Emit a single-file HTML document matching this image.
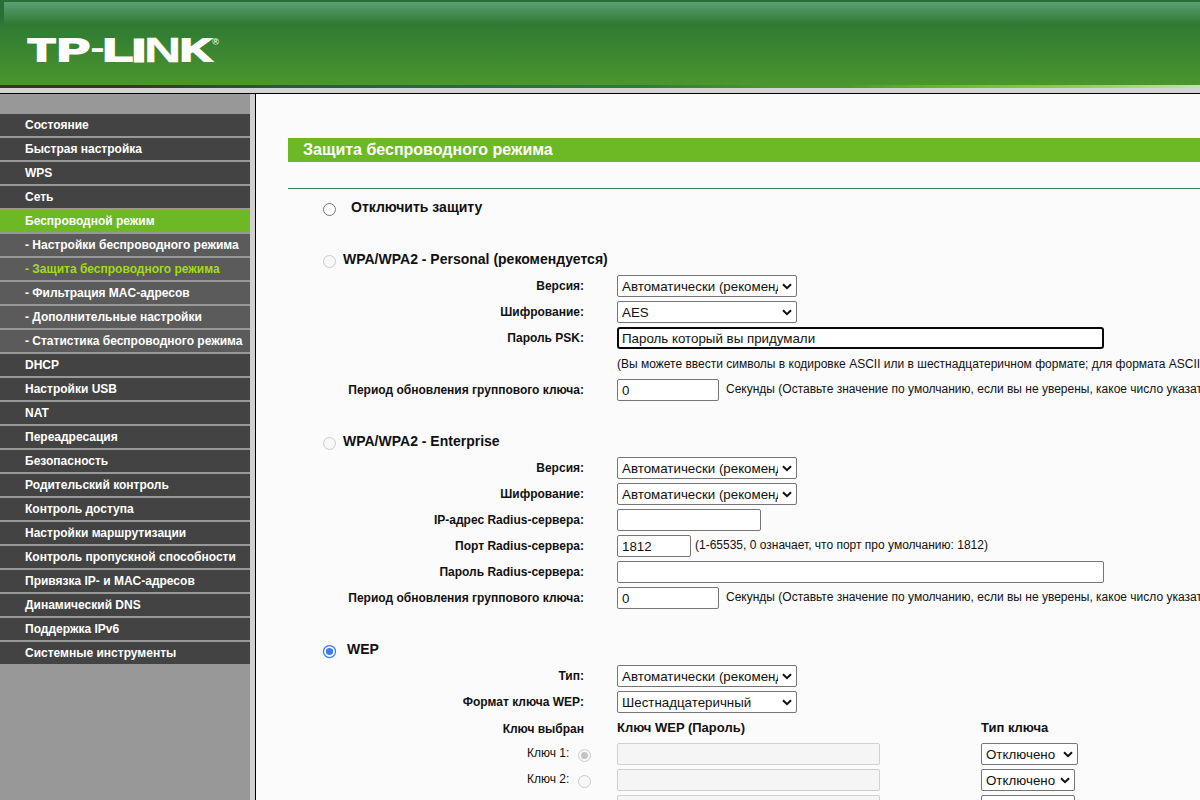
<!DOCTYPE html>
<html lang="ru">
<head>
<meta charset="utf-8">
<title>TP-LINK</title>
<style>
*{box-sizing:border-box;}
html,body{margin:0;padding:0;}
body{width:1200px;height:800px;overflow:hidden;background:#fbfbfb;font-family:"Liberation Sans",Arial,sans-serif;font-size:12px;color:#111;position:relative;}
.abs{position:absolute;}
/* header */
#hdr{position:absolute;left:0;top:0;width:1200px;height:85px;background:linear-gradient(to bottom,#2e7a33 0,#2e7a33 24px,#4b962d 85px);}
#hdr .top{position:absolute;left:0;top:0;width:1200px;height:2px;background:#276f37;}
#hdr .gloss{position:absolute;left:4px;top:2px;width:1196px;height:22px;background:linear-gradient(to bottom,#5c9f73 0,#2e7a34 22px);}
#hdr .lft{position:absolute;left:0;top:0;width:4px;height:26px;background:linear-gradient(to bottom,#276f37 0,#276f37 16px,#2e7a33 26px);}
#stripe{position:absolute;left:0;top:85px;width:1200px;height:3px;background:linear-gradient(to right,#333 0,#333 120px,#275c38 280px,#29703a 500px,#2d7c35 640px,#4b962d 770px,#4b962d 840px,#6cbd2a 960px,#8fd053 1080px,#bfe4a6 1200px);}
#lgray{position:absolute;left:0;top:88px;width:1200px;height:5px;background:#d3d3d3;}
#bline{position:absolute;left:0;top:93px;width:1200px;height:1px;background:#000;}
#logo{position:absolute;left:0;top:0;}
/* sidebar */
#side{position:absolute;left:0;top:94px;width:250px;height:706px;background:#989898;}
#sstrip{position:absolute;left:250px;top:94px;width:5px;height:706px;background:#d0d0d0;}
#vline{position:absolute;left:255px;top:94px;width:1px;height:706px;background:#000;}
#menu{position:absolute;left:0;top:20px;width:250px;margin:0;padding:0;list-style:none;}
#menu li{height:22px;margin-bottom:2px;background:#434343;color:#fff;font-weight:bold;font-size:12px;line-height:22px;padding-left:25px;white-space:nowrap;}
#menu li.act{background:#6db825;}
#menu li.sub{background:#5b5b5b;}
#menu li.cur{color:#a2db1c;}
/* content */
#title{position:absolute;left:288px;top:138px;width:912px;height:24px;background:#6db825;color:#fff;font-weight:bold;font-size:16px;line-height:23px;padding-left:15px;white-space:nowrap;}
#gl{position:absolute;left:288px;top:188px;width:912px;height:1px;background:#348550;}
.lbl{position:absolute;left:300px;width:284px;text-align:right;font-weight:bold;font-size:12px;line-height:14px;white-space:nowrap;color:#111;}
.sec{position:absolute;font-weight:bold;font-size:14px;line-height:16px;white-space:nowrap;color:#111;}
.txt{position:absolute;font-size:12px;line-height:14px;white-space:nowrap;color:#111;}
.sel{position:absolute;height:22px;border:1px solid #767676;border-radius:2px;background:#fff;font-size:13.33px;line-height:22px;padding-left:4px;white-space:nowrap;overflow:hidden;color:#111;}
.sel svg{position:absolute;right:4px;top:7px;width:10px;height:7px;}
.sel .t{display:block;overflow:hidden;white-space:nowrap;}
.inp{position:absolute;height:22px;border:1px solid #767676;border-radius:2px;background:#fff;font-size:13.33px;line-height:22px;padding-left:4px;white-space:nowrap;color:#111;}
.inp.dis{border-color:#d0d0d0;background:#f5f5f5;}
.inp.foc{border:2px solid #080808;border-radius:3px;line-height:20px;padding-left:3px;}
.rad{position:absolute;width:13px;height:13px;border:1px solid #767676;border-radius:50%;background:#fff;}
.rad.dim{border-color:#cacaca;background:#f8f8f8;}
.rad.on{border:1px solid #2a6fe8;}
.rad.on i{position:absolute;left:2px;top:2px;width:7px;height:7px;border-radius:50%;background:#2a6fe8;}
.rad.dim.on2 i{position:absolute;left:2px;top:2px;width:7px;height:7px;border-radius:50%;background:#c4c4c4;}
</style>
</head>
<body>
<div id="hdr"><div class="top"></div><div class="gloss"></div><div class="lft"></div>
<svg id="logo" width="240" height="85" viewBox="0 0 240 85"><text font-family="Liberation Sans, Arial, sans-serif" font-weight="bold" font-size="33" fill="#fff" stroke="#fff" stroke-linejoin="miter"><tspan x="28.24" y="60.90" font-size="31.69" stroke-width="2.2" textLength="26.72" lengthAdjust="spacingAndGlyphs">T</tspan><tspan x="57.27" y="61.00" font-size="31.98" stroke-width="2" textLength="32.37" lengthAdjust="spacingAndGlyphs">P</tspan><tspan x="90.31" y="57.95" font-size="31.00" stroke-width="0" textLength="14.42" lengthAdjust="spacingAndGlyphs">-</tspan><tspan x="103.01" y="61.00" font-size="31.98" stroke-width="2" textLength="29.66" lengthAdjust="spacingAndGlyphs">L</tspan><tspan x="130.68" y="61.50" font-size="33.43" stroke-width="1" textLength="16.37" lengthAdjust="spacingAndGlyphs">I</tspan><tspan x="144.02" y="61.85" font-size="34.45" stroke-width="0.3" textLength="37.22" lengthAdjust="spacingAndGlyphs">N</tspan><tspan x="180.01" y="61.10" font-size="32.27" stroke-width="1.8" textLength="32.20" lengthAdjust="spacingAndGlyphs">K</tspan></text><text x="212.3" y="44.6" font-family="Liberation Sans, Arial, sans-serif" font-size="9" font-weight="bold" fill="#e6f4e2">®</text></svg>
</div>
<div id="stripe"></div><div id="lgray"></div><div id="bline"></div>

<div id="side">
<ul id="menu">
<li>Состояние</li>
<li>Быстрая настройка</li>
<li>WPS</li>
<li>Сеть</li>
<li class="act">Беспроводной режим</li>
<li class="sub">- Настройки беспроводного режима</li>
<li class="sub cur">- Защита беспроводного режима</li>
<li class="sub">- Фильтрация MAC-адресов</li>
<li class="sub">- Дополнительные настройки</li>
<li class="sub">- Статистика беспроводного режима</li>
<li>DHCP</li>
<li>Настройки USB</li>
<li>NAT</li>
<li>Переадресация</li>
<li>Безопасность</li>
<li>Родительский контроль</li>
<li>Контроль доступа</li>
<li>Настройки маршрутизации</li>
<li>Контроль пропускной способности</li>
<li>Привязка IP- и MAC-адресов</li>
<li>Динамический DNS</li>
<li>Поддержка IPv6</li>
<li>Системные инструменты</li>
</ul>
</div>
<div id="sstrip"></div><div id="vline"></div>

<div id="title">Защита беспроводного режима</div>
<div id="gl"></div>

<!-- section 1 -->
<div class="rad" style="left:323px;top:203px;"></div>
<div class="sec" style="left:351px;top:199px;">Отключить защиту</div>

<!-- section 2 -->
<div class="rad dim" style="left:323px;top:255px;"></div>
<div class="sec" style="left:343px;top:251px;">WPA/WPA2 - Personal (рекомендуется)</div>

<div class="lbl" style="top:279px;">Версия:</div>
<div class="sel" style="left:617px;top:275px;width:180px;"><span class="t" style="width:156px;">Автоматически (рекомендуется)</span><svg viewBox="0 0 10 7"><path d="M1 1.2 L5 5.2 L9 1.2" fill="none" stroke="#111" stroke-width="2"/></svg></div>
<div class="lbl" style="top:305px;">Шифрование:</div>
<div class="sel" style="left:617px;top:301px;width:180px;"><span class="t" style="width:156px;">AES</span><svg viewBox="0 0 10 7"><path d="M1 1.2 L5 5.2 L9 1.2" fill="none" stroke="#111" stroke-width="2"/></svg></div>
<div class="lbl" style="top:331px;">Пароль PSK:</div>
<div class="inp foc" style="left:617px;top:327px;width:487px;">Пароль который вы придумали</div>
<div class="txt" style="left:617px;top:357px;">(Вы можете ввести символы в кодировке ASCII или в шестнадцатеричном формате; для формата ASCII длина пароля должна быть от 8 до 63 символов)</div>
<div class="lbl" style="top:383px;">Период обновления группового ключа:</div>
<div class="inp" style="left:617px;top:379px;width:102px;">0</div>
<div class="txt" style="left:726px;top:382px;">Секунды (Оставьте значение по умолчанию, если вы не уверены, какое число указать, минимальное значение 30, 0 означает отсутствие обновления)</div>

<!-- section 3 -->
<div class="rad dim" style="left:323px;top:437px;"></div>
<div class="sec" style="left:343px;top:433px;">WPA/WPA2 - Enterprise</div>
<div class="lbl" style="top:461px;">Версия:</div>
<div class="sel" style="left:617px;top:457px;width:180px;"><span class="t" style="width:156px;">Автоматически (рекомендуется)</span><svg viewBox="0 0 10 7"><path d="M1 1.2 L5 5.2 L9 1.2" fill="none" stroke="#111" stroke-width="2"/></svg></div>
<div class="lbl" style="top:487px;">Шифрование:</div>
<div class="sel" style="left:617px;top:483px;width:180px;"><span class="t" style="width:156px;">Автоматически (рекомендуется)</span><svg viewBox="0 0 10 7"><path d="M1 1.2 L5 5.2 L9 1.2" fill="none" stroke="#111" stroke-width="2"/></svg></div>
<div class="lbl" style="top:513px;">IP-адрес Radius-сервера:</div>
<div class="inp" style="left:617px;top:509px;width:144px;"></div>
<div class="lbl" style="top:539px;">Порт Radius-сервера:</div>
<div class="inp" style="left:617px;top:535px;width:74px;">1812</div>
<div class="txt" style="left:695px;top:538px;">(1-65535, 0 означает, что порт про умолчанию: 1812)</div>
<div class="lbl" style="top:565px;">Пароль Radius-сервера:</div>
<div class="inp" style="left:617px;top:561px;width:487px;"></div>
<div class="lbl" style="top:591px;">Период обновления группового ключа:</div>
<div class="inp" style="left:617px;top:587px;width:102px;">0</div>
<div class="txt" style="left:726px;top:590px;">Секунды (Оставьте значение по умолчанию, если вы не уверены, какое число указать, минимальное значение 30, 0 означает отсутствие обновления)</div>

<!-- section 4 -->
<svg class="abs" style="left:322px;top:644px;" width="15" height="15" viewBox="0 0 15 15"><circle cx="7.5" cy="7.5" r="6" fill="#fff" stroke="#3a79f0" stroke-width="1.25"/><circle cx="7.5" cy="7.5" r="3.6" fill="#3a79f0"/></svg>
<div class="sec" style="left:347px;top:641px;">WEP</div>
<div class="lbl" style="top:669px;">Тип:</div>
<div class="sel" style="left:617px;top:665px;width:180px;"><span class="t" style="width:156px;">Автоматически (рекомендуется)</span><svg viewBox="0 0 10 7"><path d="M1 1.2 L5 5.2 L9 1.2" fill="none" stroke="#111" stroke-width="2"/></svg></div>
<div class="lbl" style="top:695px;">Формат ключа WEP:</div>
<div class="sel" style="left:617px;top:691px;width:180px;"><span class="t" style="width:156px;">Шестнадцатеричный</span><svg viewBox="0 0 10 7"><path d="M1 1.2 L5 5.2 L9 1.2" fill="none" stroke="#111" stroke-width="2"/></svg></div>
<div class="lbl" style="top:722px;">Ключ выбран</div>
<div class="sec" style="left:617px;top:720px;font-size:13px;">Ключ WEP (Пароль)</div>
<div class="sec" style="left:981px;top:720px;font-size:13px;">Тип ключа</div>

<div class="txt" style="left:527px;top:746px;">Ключ 1:</div>
<div class="rad dim on2" style="left:578px;top:749px;"><i></i></div>
<div class="inp dis" style="left:617px;top:743px;width:263px;"></div>
<div class="sel" style="left:981px;top:743px;width:97px;"><span class="t" style="width:74px;">Отключено</span><svg viewBox="0 0 10 7"><path d="M1 1.2 L5 5.2 L9 1.2" fill="none" stroke="#111" stroke-width="2"/></svg></div>

<div class="txt" style="left:527px;top:772px;">Ключ 2:</div>
<div class="rad dim" style="left:578px;top:775px;"></div>
<div class="inp dis" style="left:617px;top:769px;width:263px;"></div>
<div class="sel" style="left:981px;top:769px;width:94px;"><span class="t" style="width:74px;">Отключено</span><svg viewBox="0 0 10 7"><path d="M1 1.2 L5 5.2 L9 1.2" fill="none" stroke="#111" stroke-width="2"/></svg></div>

<div class="inp dis" style="left:617px;top:795px;width:263px;"></div>
<div class="sel" style="left:981px;top:795px;width:94px;"><span class="t" style="width:74px;">Отключено</span><svg viewBox="0 0 10 7"><path d="M1 1.2 L5 5.2 L9 1.2" fill="none" stroke="#111" stroke-width="2"/></svg></div>
</body>
</html>
